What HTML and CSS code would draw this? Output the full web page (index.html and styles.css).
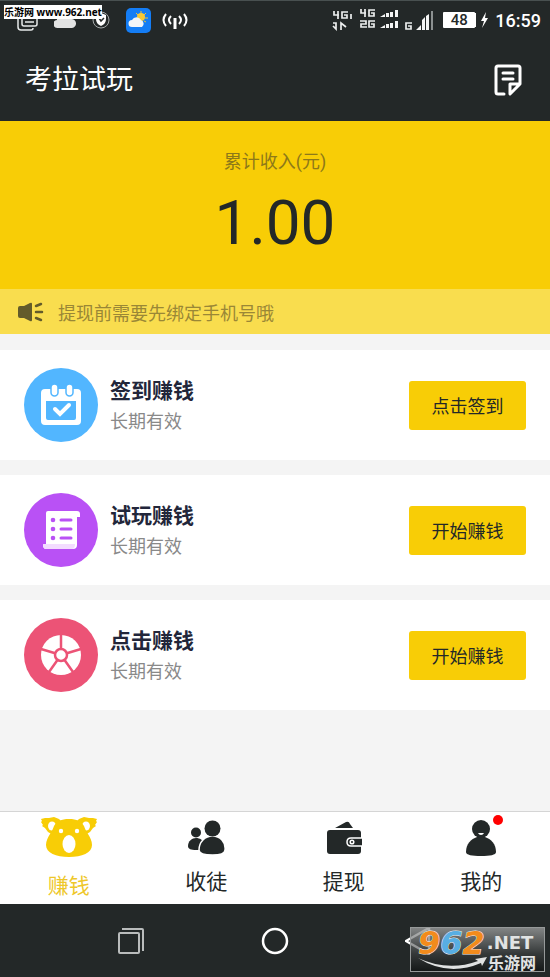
FILE: index.html
```html
<!DOCTYPE html>
<html lang="zh-CN">
<head>
<meta charset="utf-8">
<meta name="viewport" content="width=device-width, initial-scale=1">
<title>考拉试玩</title>
<link rel="stylesheet" href="styles.css">
</head>
<body>
<div class="stamp">乐游网 www.962.net</div>
<header class="top">
  <div class="status">
    <div class="notices">
      <svg width="22" height="24" viewBox="0 0 22 24" fill="none" stroke="#e6e9e9" stroke-width="1.500"><rect x="5" y="1" width="15" height="17" rx="2"/><path d="M1 4v15q0 3 3 3h10q2 0 2-2M8 10h9M8 14h9"/></svg>
      <svg width="22" height="18" viewBox="0 0 22 18"><path d="M4 17a4 4 0 0 1-1-8 5 5 0 0 1 6-6 6 6 0 0 1 8 5 4.500 4.500 0 0 1 1 9z" fill="#e2e3e3"/></svg>
      <svg width="20" height="20" viewBox="0 0 20 20"><circle cx="10" cy="10" r="8" fill="none" stroke="#a5a9a9"/><path d="M5 5l5-2 5 2v4q0 5-5 7-5-2-5-7z" fill="#fff"/><path d="M8 8l2 3 3-3" fill="none" stroke="#232828" stroke-width="1.500"/></svg>
      <svg width="25" height="25" viewBox="0 0 25 25"><rect width="25" height="25" rx="5" fill="#147df5"/><g stroke="#f4c52e" stroke-width="1"><path d="M15 3v3M20 5l-2 2M22 10h-3M10 5l2 2M20 14l-2-1"/></g><circle cx="15" cy="9" r="4" fill="#f7c934"/><path d="M6 19a3.500 3.500 0 0 1 0-7 5 5 0 0 1 9 0 4 4 0 0 1 1 7z" fill="#f2f5f8"/></svg>
      <svg class="beacon" width="26" height="20" viewBox="0 0 26 20" fill="none" stroke="#fff" stroke-width="2"><path d="M13 8v11" stroke-width="3"/><path d="M4 4q-5 6 0 12M22 4q5 6 0 12M9 6q-4 4 0 8M17 6q4 4 0 8"/></svg>
    </div>
    <div class="system">
      <svg width="102" height="22" viewBox="0 0 102 22" fill="none" stroke="#eceeee" stroke-width="1.700">
        <path d="M2 2v4h5M6 2v8M16 3h-6v6h5V6h-3M19 5v5M1 14h3v6L1 17M9 21v-7l5 4" />
        <path d="M29 0v4h5M33 0v8M43 1h-6v6h5V4h-3M28 12h6v3h-5v3h6M43 12h-6v6h5v-3h-3M80 14h-6v6h5v-3h-3"/>
        <g stroke="none" fill="#f4f5f5"><path d="M48 8l5-3v3zM54 4h3v4h-3zM58 3h3v5h-3zM63 1h3v7h-3zM48 19l5-3v3zM54 15h3v4h-3zM58 14h3v5h-3zM63 12h3v7h-3zM84 21l5-5v5zM90 11l3-3v13h-3zM94 7l3-2v16h-3z"/><path d="M99 2h2v19h-2z" fill="#8c9191"/></g>
      </svg>
      <span class="battery">48</span>
      <svg class="bolt" width="7" height="16" viewBox="0 0 7 16"><path d="M5 0L0 9h3l-2 7 6-10H4z" fill="#fff"/></svg>
      <time>16:59</time>
    </div>
  </div>
  <div class="titlebar">
    <h1>考拉试玩</h1>
    <button class="records" aria-label="记录"><svg width="28" height="32" viewBox="0 0 28 32" fill="none" stroke="#fff" stroke-width="3" stroke-linecap="round" stroke-linejoin="round"><path d="M10 30H4q-2 0-2-2V4q0-2 2-2h20q2 0 2 2v16l-10 10V20h9"/><path d="M9 9h10M9 15h10"/></svg></button>
  </div>
</header>
<main>
  <section class="income"><p>累计收入(元)</p><strong>1.00</strong></section>
  <div class="notice"><svg width="26" height="20" viewBox="0 0 26 20"><path d="M2 4h4l6-3q2-1 2 1v16q0 2-2 1l-6-3H2q-2 0-2-2V6q0-2 2-2z" fill="#635b2b"/><path d="M18 4l5-2M18 10h6M18 16l5 2" fill="none" stroke="#635b2b" stroke-width="2.500" stroke-linecap="round"/></svg><span>提现前需要先绑定手机号哦</span></div>
  <div class="tasks">
  <section class="task">
    <svg class="badge" viewBox="0 0 74 74"><circle cx="37" cy="37" r="37" fill="#52b6ff"/><path d="M21 21h32q4 0 4 4v28q0 4-4 4H21q-4 0-4-4V25q0-4 4-4zm1 12v17q0 2 2 2h26q2 0 2-2V33z" fill="#fff" fill-rule="evenodd"/><g fill="#fff" stroke="#52b6ff" stroke-width="1.500"><rect x="27" y="16" width="7" height="12" rx="3.500"/><rect x="42" y="16" width="7" height="12" rx="3.500"/></g><path d="M31 41l5 5 9-9" fill="none" stroke="#fff" stroke-width="4" stroke-linecap="round"/></svg>
    <div class="copy"><h2>签到赚钱</h2><p>长期有效</p></div><button>点击签到</button>
  </section>
  <section class="task">
    <svg class="badge" viewBox="0 0 74 74"><circle cx="37" cy="37" r="37" fill="#b951f5"/><path d="M24 18h29q3 0 3 3v3h-3v28q0 4-4 4H22q-3 0-3-4h3V20q0-2 2-2z" fill="#fff"/><path d="M19 51h32q0 5-3 5H22q-3 0-3-5z" fill="#f3dcff"/><g fill="#b951f5"><circle cx="29" cy="27" r="2.300"/><circle cx="29" cy="36" r="2.300"/><circle cx="29" cy="45" r="2.300"/></g><path d="M37 27h10M37 36h10M37 45h10" stroke="#b951f5" stroke-width="3" stroke-linecap="round"/></svg>
    <div class="copy"><h2>试玩赚钱</h2><p>长期有效</p></div><button>开始赚钱</button>
  </section>
  <section class="task">
    <svg class="badge" viewBox="0 0 74 74"><circle cx="37" cy="37" r="37" fill="#ec5376"/><circle cx="37" cy="37" r="20" fill="#fff"/><path d="M37 37V16M37 37l20-6M37 37l12 17M37 37L25 54M37 37l-20-6" stroke="#ec5376" stroke-width="2.500"/><circle cx="37" cy="37" r="6" fill="#fff" stroke="#ec5376" stroke-width="2.500"/></svg>
    <div class="copy"><h2>点击赚钱</h2><p>长期有效</p></div><button>开始赚钱</button>
  </section>
  </div>
</main>
<nav class="tabs">
  <a class="active" href="#"><svg width="56" height="42" viewBox="0 0 56 42"><g fill="#f8cd06"><path d="M0 3l4-1h4l5-1 5 2 4 4-10 12-5-3-3-4-3-2 1-1-2-3 1-1z"/><path d="M56 3l-4-1h-4l-5-1-5 2-4 4 10 12 5-3 3-4 3-2-1-1 2-3-1-1z"/></g><g fill="#fff"><ellipse cx="11" cy="10" rx="4" ry="4.500"/><ellipse cx="45" cy="10" rx="4" ry="4.500"/></g><path d="M28 3c8 0 12 2 15 7 1 3 2 5 4 8 2 3 4 7 4 11 0 8-10 12-23 12S5 37 5 29c0-4 2-8 4-11 2-3 3-5 4-8 3-5 7-7 15-7z" fill="#f8cd06"/><g fill="#fff"><circle cx="20" cy="15" r="2.200"/><circle cx="36" cy="15" r="2.200"/><ellipse cx="28" cy="28" rx="6.500" ry="9"/></g></svg><span>赚钱</span></a>
  <a href="#"><svg width="38" height="36" viewBox="0 0 38 36" fill="#232828"><circle cx="9" cy="12.500" r="5"/><path d="M1 26c0-5 4-8 8-8s7 2 8 6l-3 6H9c-5 0-8-1-8-4z"/><path d="M12 30c0-8 6-14 13.500-14S39 22 38 30c0 4-6 5-12.500 5S12 34 12 30z" stroke="#fff" stroke-width="1.500"/><circle cx="25.500" cy="8.500" r="8"/></svg><span>收徒</span></a>
  <a href="#"><svg width="36" height="36" viewBox="0 0 36 36"><path d="M9 8L20 2q3-1 4 2l3 4z" fill="#232828"/><rect x="1" y="10" width="34" height="24" rx="3" fill="#232828"/><path d="M36 18H25q-4 0-4 4t4 4h11" fill="#232828" stroke="#fff" stroke-width="1.500"/><circle cx="26" cy="22" r="1.800" fill="#232828" stroke="#fff" stroke-width="1.500"/></svg><span>提现</span></a>
  <a href="#"><svg width="36" height="36" viewBox="0 0 36 36"><path d="M3 32c0-8 5-13 11-15h8c6 2 11 7 11 15 0 3-6 4-15 4S3 35 3 32z" fill="#232828"/><circle cx="18" cy="9" r="9" fill="#232828"/><path d="M15 13h6q-1 2-3 2t-3-2z" fill="#fff"/></svg><span>我的</span><i class="dot"></i></a>
</nav>
<footer class="system-nav">
  <button aria-label="最近任务"><svg width="28" height="28" viewBox="0 0 28 28" fill="none" stroke="#b9bcbc" stroke-width="2"><rect x="2" y="6" width="20" height="20" rx="1"/><path d="M5 2h20q1 0 1 1v21"/></svg></button>
  <button aria-label="主页"><svg width="28" height="28" viewBox="0 0 28 28"><circle cx="14" cy="14" r="12" fill="none" stroke="#fff" stroke-width="2.500"/></svg></button>
  <button aria-label="返回"><svg width="28" height="28" viewBox="0 0 28 28"><path d="M24 1v26L1 14z" fill="none" stroke="#fff" stroke-width="2.500" stroke-linejoin="round"/></svg></button>
</footer>
<div class="site-mark">
  <div class="wordmark"><b><em>9</em><em>6</em><em>2</em></b><span>.NET</span></div>
  <div class="byline"><svg width="70" height="14" viewBox="0 0 70 14"><path d="M0 1q30 14 60 3l-3-2 12-2-5 9-1-3Q30 20 0 1z" fill="#dfe1e1"/></svg><strong>乐游网</strong></div>
</div>
</body>
</html>
```

FILE: styles.css
```css
* { box-sizing: border-box; }
body {
  --dark: #232828;
  --yellow: #f8cd06;
  margin: 0;
  min-height: 100vh;
  display: flex;
  flex-direction: column;
  background: #f4f4f4;
  color: var(--dark);
  font-family: Roboto, "Noto Sans CJK SC", sans-serif;
}
h1, h2, p { margin: 0; font-weight: 400; }
button { border: 0; padding: 0; font: inherit; color: inherit; background: none; }
svg { display: block; flex: none; }
.stamp { position: absolute; top: 5px; left: 4px; line-height: 14px; background: #fff; color: #000; font-family: "Open Sans", "Noto Sans CJK SC", sans-serif; font-size: 10px; font-weight: 700; white-space: nowrap; }
.top { background: var(--dark); color: #fff; border-top: 1px solid #485050; }
.status { height: 38px; display: flex; justify-content: space-between; padding: 0 9px 0 17px; }
.notices, .system { display: flex; align-items: center; }
.notices { gap: 15px; }
.beacon { margin-left: -4px; }
.battery { width: 32px; margin-left: 9px; background: #fff; color: var(--dark); border-radius: 1px; font-size: 15px; line-height: 16px; font-weight: 500; text-align: center; box-shadow: 2px 0 0 -1px #fff; }
.bolt { margin: 0 7px 0 6px; }
time { font-size: 18px; font-weight: 500; }
.titlebar { height: 82px; padding: 0 28px 0 25px; display: flex; align-items: center; justify-content: space-between; }
h1 { font-size: 27px; line-height: 40px; }
.income { padding: 28px 0 30px; background: var(--yellow); text-align: center; }
.income p { font-size: 18px; line-height: 26px; color: #8d7919; }
.income strong { display: block; font-size: 62px; line-height: 72px; font-weight: 400; margin-top: 12px; }
.notice { height: 45px; padding-left: 18px; display: flex; align-items: center; gap: 14px; background: #f9dd4e; color: #9a8736; font-size: 18px; }
.tasks { padding: 16px 0; display: grid; gap: 15px; }
.task { height: 110px; padding: 0 24px; display: flex; align-items: center; background: #fff; }
.badge { width: 74px; height: 74px; }
.copy { flex: 1; margin-left: 12px; padding-top: 2px; }
.copy h2 { font-size: 21px; line-height: 32px; font-weight: 700; color: #22263a; }
.copy p { font-size: 18px; line-height: 30px; color: #898989; }
.task button { width: 117px; height: 49px; border-radius: 3px; background: var(--yellow); font-size: 18px; }
.tabs { margin-top: auto; height: 93px; display: grid; grid-template-columns: repeat(4, 1fr); background: #fff; border-top: 1px solid #d5d5d5; }
.tabs a { position: relative; padding-top: 8px; display: flex; flex-direction: column; align-items: center; color: var(--dark); text-decoration: none; font-size: 21px; line-height: 32px; }
.tabs a span { margin-top: 10px; }
.tabs .active { padding-top: 4px; color: #eec729; }
.tabs .active span { margin-top: 12px; }
.dot { position: absolute; top: 3px; left: calc(50% + 12px); width: 10px; height: 10px; border-radius: 50%; background: #f00; }
.system-nav { height: 73px; background: var(--dark); display: flex; align-items: center; justify-content: space-around; padding: 0 59px; }
.site-mark { position: absolute; right: 5px; bottom: 5px; width: 135px; height: 45px; padding-left: 7px; border: 1px solid #969999; background: linear-gradient(#9a9c9ccc, #40434399 60%, #0c0e0e99); color: #e1e3e3; }
.wordmark { display: flex; align-items: center; gap: 2px; height: 29px; }
.wordmark b { font: italic 700 32px/32px "DejaVu Sans", sans-serif; -webkit-text-stroke: 1px #eee; paint-order: stroke fill; }
.wordmark em { color: #f28b1c; }
.wordmark em:nth-child(2) { color: #58aee3; }
.wordmark span { font: 700 18px/24px "DejaVu Sans", sans-serif; }
.byline { display: flex; align-items: center; height: 13px; }
.byline strong { font-size: 16px; line-height: 18px; }
```
